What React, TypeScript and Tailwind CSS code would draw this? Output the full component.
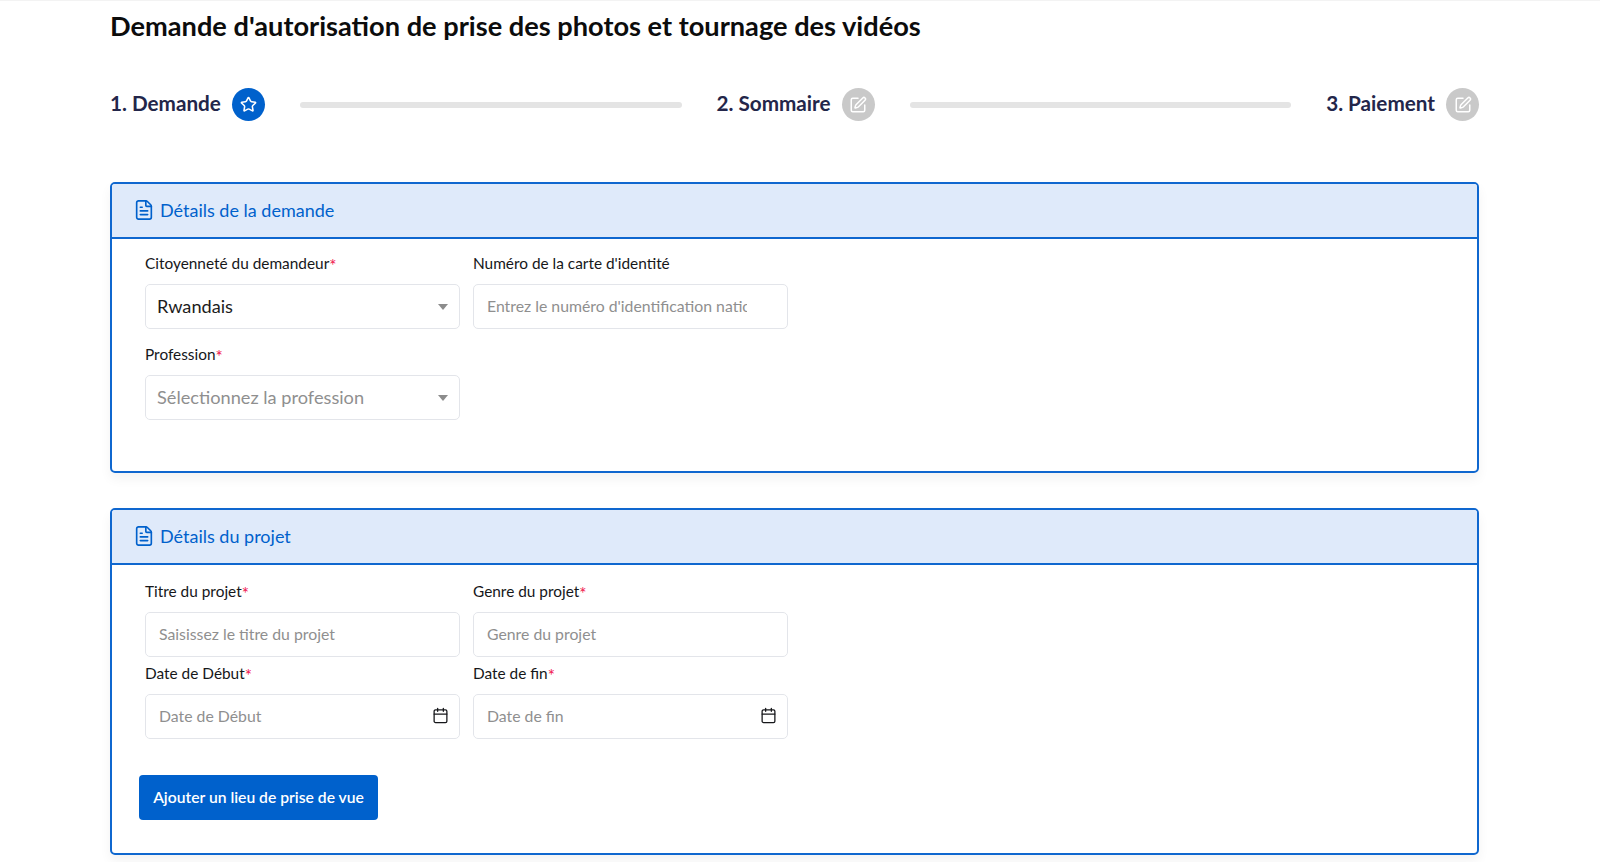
import React from "react";
import { Calendar, FileText, SquarePen, Star } from "lucide-react";

const Req = () => <span className="relative top-[3px] text-[#f0134d] text-[17px] leading-[14px]">*</span>;

const Step = ({ label, active }: { label: string; active?: boolean }) => (
  <div className="flex items-center gap-[11px] shrink-0">
    <span className="pb-[3px] text-[20.7px] leading-[28px] font-bold text-[#23264a]">{label}</span>
    <span
      className={
        active
          ? "w-[33px] h-[33px] rounded-full flex items-center justify-center bg-[#0061cc] text-white"
          : "w-[33px] h-[33px] rounded-full flex items-center justify-center bg-[#c9c9c9] text-white"
      }
    >
      {active ? <Star size={17} strokeWidth={2.2} /> : <SquarePen size={18} strokeWidth={2} />}
    </span>
  </div>
);

const Bar = () => <div className="flex-1 h-[6px] rounded-full bg-[#e4e4e4]" />;

const Card = ({ title, children }: { title: string; children: React.ReactNode }) => (
  <section className="border-2 border-[#0f67cf] rounded-[5px] shadow-[0_6px_12px_rgba(0,0,0,0.05)] overflow-hidden">
    <div className="h-[55px] pb-[1px] bg-[#dfeafa] border-b-2 border-[#0f67cf] flex items-center gap-[5px] pl-[21px] text-[#0061cc]">
      <FileText size={22} strokeWidth={1.8} />
      <span className="text-[18px] leading-[24px]">{title}</span>
    </div>
    {children}
  </section>
);

const Field = ({ label, required, children }: { label: string; required?: boolean; children: React.ReactNode }) => (
  <div className="w-[314.5px]">
    <label className="block text-[15.4px] leading-[20px] text-[#16171a]">
      {label}
      {required && <Req />}
    </label>
    {children}
  </div>
);

const Input = ({ placeholder, icon }: { placeholder: string; icon?: boolean }) => (
  <div className="relative mt-[11px] h-[45px]">
    <input
      placeholder={placeholder}
      className="w-full h-full border border-[#e3e5ea] rounded-[5px] pl-[13px] pr-[40px] pb-[2px] text-[15.8px] outline-none placeholder:text-[#8f8f8f]"
    />
    {icon && <Calendar size={17} strokeWidth={1.8} className="absolute right-[11px] top-[13px] text-[#16171a]" />}
  </div>
);

const Select = ({ value, muted }: { value: string; muted?: boolean }) => (
  <div className="mt-[11px] h-[45px] border border-[#e3e5ea] rounded-[5px] pl-[11px] pr-[11px] flex items-center justify-between">
    <span className={muted ? "text-[18.2px] text-[#8f8f8f]" : "text-[18.2px] text-[#1c1c1c]"}>{value}</span>
    <span className="w-0 h-0 border-x-[5px] border-x-transparent border-t-[6px] border-t-[#8c8c8c]" />
  </div>
);

export default function App() {
  return (
    <div
      className="w-[1600px] h-[862px] overflow-hidden bg-white border-t border-[#f3f3f3] pl-[110px] pr-[121px]"
      style={{ fontFamily: "Lato, sans-serif" }}
    >
      <h1 className="mt-[8px] text-[27.2px] leading-[34px] font-bold text-[#0c0c0c]">
        Demande d'autorisation de prise des photos et tournage des vidéos
      </h1>

      <div className="mt-[45px] h-[33px] flex items-center gap-[35px]">
        <Step label="1. Demande" active />
        <Bar />
        <Step label="2. Sommaire" />
        <Bar />
        <Step label="3. Paiement" />
      </div>

      <div className="mt-[61px]">
        <Card title="Détails de la demande">
          <div className="pl-[33px] pt-[14px] h-[232px]">
            <div className="flex gap-[13.5px]">
              <Field label="Citoyenneté du demandeur" required>
                <Select value="Rwandais" />
              </Field>
              <Field label="Numéro de la carte d'identité">
                <Input placeholder="Entrez le numéro d'identification nationale" />
              </Field>
            </div>
            <div className="mt-[15px]">
              <Field label="Profession" required>
                <Select value="Sélectionnez la profession" muted />
              </Field>
            </div>
          </div>
        </Card>
      </div>

      <div className="mt-[35px]">
        <Card title="Détails du projet">
          <div className="pl-[33px] pt-[16px] h-[288px]">
            <div className="flex gap-[13.5px]">
              <Field label="Titre du projet" required>
                <Input placeholder="Saisissez le titre du projet" />
              </Field>
              <Field label="Genre du projet" required>
                <Input placeholder="Genre du projet" />
              </Field>
            </div>
            <div className="mt-[6px] flex gap-[13.5px]">
              <Field label="Date de Début" required>
                <Input placeholder="Date de Début" icon />
              </Field>
              <Field label="Date de fin" required>
                <Input placeholder="Date de fin" icon />
              </Field>
            </div>
            <button className="mt-[36px] -ml-[6px] h-[45px] w-[239px] rounded-[4px] bg-[#0061cc] text-white text-[15.7px] font-semibold">
              Ajouter un lieu de prise de vue
            </button>
          </div>
        </Card>
      </div>
    </div>
  );
}
